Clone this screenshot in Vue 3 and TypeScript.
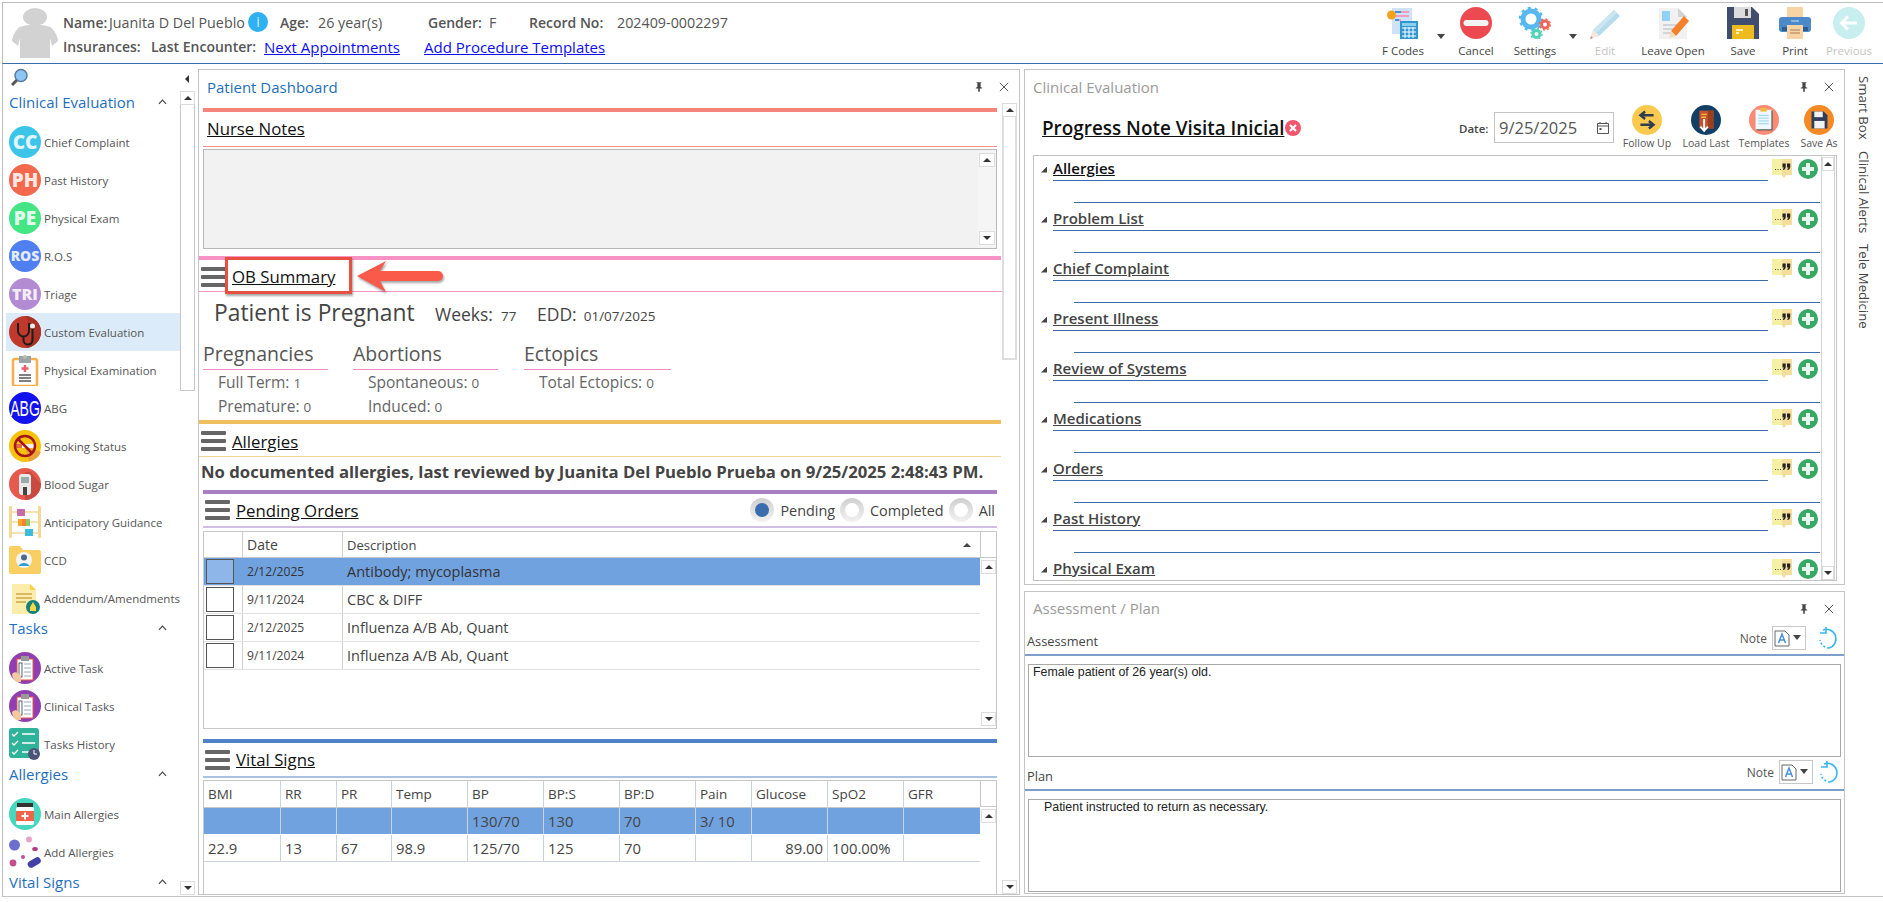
<script setup lang="ts">
const T = (s: string, size: number) =>
  `<text x="16" y="${16 + size * 0.36}" text-anchor="middle" font-family="Open Sans, sans-serif" font-weight="800" font-size="${size}" fill="#fff" fill-opacity=".85">${s}</text>`
const clip = `<rect x="8" y="7" width="16" height="21" fill="#fff" stroke="#e4574a"/><rect x="12" y="4" width="8" height="5" fill="#999"/><path d="M15 12h7M15 16h7M15 20h7M15 24h7" stroke="#9ab" /><rect x="10" y="11" width="3" height="14" fill="none" stroke="#2c3e50" stroke-width=".8"/><path d="M3 22c3-3 6-2 9 2v6H7c-2-2-4-5-4-8z" fill="#f3c9a0"/>`

const icons: Record<string, string> = {
  cc: `<circle cx="16" cy="16" r="16" fill="#3cc5e8"/>` + T('CC', 19),
  ph: `<circle cx="16" cy="16" r="16" fill="#f4694d"/>` + T('PH', 19),
  pe: `<circle cx="16" cy="16" r="16" fill="#43e585"/>` + T('PE', 19),
  ros: `<circle cx="16" cy="16" r="16" fill="#4f7ff0"/>` + T('ROS', 14),
  tri: `<circle cx="16" cy="16" r="16" fill="#b28bd2"/>` + T('TRI', 16),
  custom: `<circle cx="16" cy="16" r="16" fill="#c0392b"/><path d="M16 0a16 16 0 0 1 0 32c8-6 10-20 0-32z" fill="#a93226"/><path d="M9 7v8a5.5 5.5 0 0 0 11 0V7" fill="none" stroke="#1d1d1d" stroke-width="2"/><path d="M14.500 21v3a4.500 4.500 0 0 0 9 0V12" fill="none" stroke="#1d1d1d" stroke-width="2"/><circle cx="23.500" cy="10" r="2.500" fill="#eee"/>`,
  exam: `<rect x="4" y="5" width="24" height="27" rx="2" fill="#fff" stroke="#f5b04c" stroke-width="2.500"/><path d="M10 2h12v7H10z" fill="#9aa5a8"/><circle cx="16" cy="3" r="2" fill="#bbb"/><path d="M16 11v7M12.500 14.500h7" stroke="#ef5f6a" stroke-width="2.400"/><path d="M10 21h12M10 24h12M10 27h12" stroke="#555" stroke-width="1.300"/>`,
  abg: `<circle cx="16" cy="16" r="16" fill="#1212ef"/><text transform="translate(16 23.500) scale(1 1.600)" text-anchor="middle" font-family="Liberation Sans, sans-serif" font-size="14" fill="#fff">ABG</text>`,
  smoke: `<circle cx="16" cy="16" r="16" fill="#f8c10b"/><path d="M16 16 32 22a16 16 0 0 1-12 9.500z" fill="#e9a13a"/><rect x="5" y="14" width="22" height="4" fill="#f3f3f3"/><rect x="5" y="14" width="8" height="4" fill="#e2703a"/><circle cx="16" cy="16" r="10" fill="none" stroke="#a4161a" stroke-width="2.500"/><path d="M9 9l14 14" stroke="#a4161a" stroke-width="2.500"/>`,
  sugar: `<circle cx="16" cy="16" r="16" fill="#e55a4d"/><path d="M16 4h6l10 12a16 16 0 0 1-16 16z" fill="#c84a40"/><rect x="10" y="6" width="12" height="21" rx="3" fill="#e8e8e8"/><rect x="12" y="9" width="8" height="6" fill="#9aa"/><rect x="14" y="19" width="4" height="8" fill="#444"/>`,
  abacus: `<rect x="0" y="0" width="3" height="32" rx="1" fill="#f5d898"/><rect x="29" y="0" width="3" height="32" rx="1" fill="#f5d898"/><path d="M3 6h26M3 16h26M3 27h26" stroke="#f5d898" stroke-width="1.500"/><rect x="8" y="3" width="8" height="7" fill="#c86ba8"/><rect x="9" y="13" width="4" height="7" fill="#f5a623"/><rect x="13" y="13" width="4" height="7" fill="#f5813a"/><rect x="17" y="13" width="4" height="7" fill="#8cc96a"/><rect x="16" y="23" width="8" height="7" fill="#3cbde0"/>`,
  ccd: `<path d="M0 4a2 2 0 0 1 2-2h9l3 4h16a2 2 0 0 1 2 2v20a2 2 0 0 1-2 2H2a2 2 0 0 1-2-2z" fill="#f9cf63"/><circle cx="15" cy="16" r="8" fill="#f4f4f4"/><circle cx="15" cy="13.500" r="3" fill="#4a6a8a"/><path d="M9.500 22a6 5 0 0 1 11 0z" fill="#2d9fd8"/>`,
  add: `<path d="M3 2h18l6 6v24H3z" fill="#fcedaa"/><path d="M21 2l6 6h-6z" fill="#f8d04a"/><path d="M7 12h16M7 16h16M7 20h10" stroke="#c9a94a" stroke-width="1.400"/><circle cx="24" cy="25" r="7" fill="#16807a"/><path d="M24 20l3 5v4h-6v-4z" fill="#f7d84a"/>`,
  task: `<circle cx="16" cy="16" r="16" fill="#8f3fb0"/>` + clip,
  hist: `<rect x="0" y="0" width="30" height="30" rx="3" fill="#2fb39a"/><path d="M3 6l2 2 4-4M3 15l2 2 4-4M3 24l2 2 4-4" fill="none" stroke="#fff" stroke-width="1.300"/><path d="M13 6h13M13 15h13M13 24h7" stroke="#fff" stroke-width="1.600"/><circle cx="25" cy="26" r="6" fill="#4a5578"/><path d="M25 22v4h3" fill="none" stroke="#fff"/>`,
  mainall: `<circle cx="16" cy="16" r="16" fill="#46d8be"/><rect x="8" y="5" width="16" height="4" fill="#333"/><rect x="7" y="9" width="18" height="18" rx="2" fill="#fff"/><rect x="7" y="13" width="18" height="10" fill="#f0644c"/><path d="M16 14.500v7M12.500 18h7" stroke="#fff" stroke-width="2"/>`,
  addall: `<ellipse cx="5.500" cy="9" rx="5.500" ry="5.500" fill="#6d6fd0"/><circle cx="20" cy="3.500" r="3" fill="#e8a3c8"/><ellipse cx="26" cy="13" rx="2.800" ry="2" fill="#b03a80"/><circle cx="14" cy="21" r="2" fill="#c44f9c"/><circle cx="4" cy="27" r="3.400" fill="#c44f8c"/><rect x="18" y="23" width="14" height="7" rx="3.500" transform="rotate(-30 25 26)" fill="#4240a8"/>`,
  fcodes: `<rect x="5" y="1" width="20" height="26" fill="#cfe3f8"/><path d="M8 5h14M8 9h14M8 13h6" stroke="#f29ac0" stroke-width="2"/><path d="M8 5h6M8 13h4" stroke="#4a90d9" stroke-width="2"/><circle cx="4.500" cy="8" r="4.500" fill="#f4a11c"/><rect x="13" y="14" width="18" height="18" fill="#2f97d4"/><rect x="15" y="16" width="14" height="3" fill="#8bd1ee"/><path d="M15 21h14M15 25h14M15 29h14M18 20v11M22 20v11M26 20v11" stroke="#fff" stroke-width="1"/>`,
  cancel: `<circle cx="16" cy="16" r="16" fill="#ec4a50"/><rect x="3.500" y="13" width="25" height="6" rx="3" fill="#f3f3f3"/>`,
  settings: `<circle cx="12" cy="12" r="8" fill="none" stroke="#57b9f0" stroke-width="5"/><circle cx="12" cy="12" r="11" fill="none" stroke="#57b9f0" stroke-width="2.500" stroke-dasharray="3 3.900"/><circle cx="26" cy="17.500" r="3.500" fill="none" stroke="#f0675a" stroke-width="3"/><circle cx="26" cy="17.500" r="5.500" fill="none" stroke="#f0675a" stroke-width="1.400" stroke-dasharray="2 2.300"/><circle cx="17.500" cy="27" r="3.500" fill="none" stroke="#4fd3b6" stroke-width="3"/><circle cx="17.500" cy="27" r="5.500" fill="none" stroke="#4fd3b6" stroke-width="1.400" stroke-dasharray="2 2.300"/>`,
  edit: `<path d="M25 3l6 6L10 29l-6-6z" fill="#b5dcec"/><path d="M25 3l3 3L7 26l-3-3z" fill="#c9e6f1"/><path d="M4 23l6 6-9 3z" fill="#f3e6dc"/><path d="M2 29l2 2-3 1z" fill="#c88"/>`,
  leave: `<path d="M2 1h19l9 9v22H2z" fill="#f1f1f1"/><path d="M21 1l9 9h-9z" fill="#d4d4d4"/><rect x="5" y="4" width="8" height="10" fill="#8ed2f5"/><path d="M6 18h16M6 22h12M6 26h10" stroke="#c4ccd4" stroke-width="1.600"/><path d="M27 9l5 5-13 15-5-5z" fill="#f4812a"/><path d="M14 24l5 5-7 2z" fill="#f5d9b8"/>`,
  save: `<path d="M0 0h25l7 7v25H0z" fill="#414d6d"/><rect x="7" y="0" width="17" height="11" fill="#dcdcdc"/><rect x="18" y="2" width="3" height="7" fill="#555"/><rect x="5" y="18" width="22" height="14" fill="#eebb1e"/><path d="M9 23h7M9 26h3" stroke="#fff" stroke-width="1.300"/>`,
  print: `<rect x="8" y="0" width="16" height="12" fill="#f8d3a4"/><rect x="0" y="10" width="32" height="15" rx="3" fill="#4c89c8"/><rect x="3" y="20" width="26" height="4" fill="#2b5d93"/><rect x="8" y="18" width="16" height="14" fill="#f8d3a4"/><path d="M11 23h10M11 26h10" stroke="#a87c52"/><path d="M12 14h8" stroke="#cfe1f2"/>`,
  prev: `<circle cx="16" cy="16" r="16" fill="#c8eef0"/><path d="M24 16H9M15 9.500 8.500 16l6.500 6.500" fill="none" stroke="#fff" stroke-width="3"/>`,
  follow: `<circle cx="16" cy="16" r="16" fill="#fbc94e"/><path d="M23 11H10M14 7l-5 4 5 4M9 21h13M18 17l5 4-5 4" fill="none" stroke="#2c3e50" stroke-width="2.600"/>`,
  load: `<circle cx="16" cy="16" r="16" fill="#123f63"/><rect x="9" y="6" width="15" height="19" fill="#c8532b"/><rect x="18" y="6" width="6" height="19" fill="#9c3f21"/><path d="M11 10h6M11 13h5" stroke="#f5b841" stroke-width="1.500"/><path d="M14 15v12M10 23l4 4.500 4-4.500" fill="none" stroke="#fff" stroke-width="2"/>`,
  tmpl: `<circle cx="16" cy="16" r="16" fill="#f98b74"/><rect x="8" y="6" width="17" height="21" fill="#2c3e50"/><rect x="7" y="5" width="17" height="21" fill="#eef8fd"/><rect x="12" y="3" width="7" height="4" fill="#f5b841"/><path d="M10 11h11M10 14h11M10 17h11M10 20h11" stroke="#8fd0ee"/>`,
  saveas: `<circle cx="16" cy="16" r="16" fill="#f58a25"/><path d="M8 7h13l4 4v14H8z" fill="#2f3e5c"/><rect x="11" y="7" width="9" height="6" fill="#f2f2f2"/><rect x="11" y="17" width="11" height="8" fill="#f2f2f2"/>`,
  search: `<path d="M3 17 10 10" stroke="#555" stroke-width="3"/><circle cx="12" cy="7.500" r="6" fill="#8cc6f5" stroke="#5a7a99" stroke-width="1.500"/>`
}

type Item = { kind: 'head' | 'item'; label: string; icon?: string; active?: boolean }
const nav: Item[] = [
  { kind: 'head', label: 'Clinical Evaluation' },
  { kind: 'item', label: 'Chief Complaint', icon: 'cc' },
  { kind: 'item', label: 'Past History', icon: 'ph' },
  { kind: 'item', label: 'Physical Exam', icon: 'pe' },
  { kind: 'item', label: 'R.O.S', icon: 'ros' },
  { kind: 'item', label: 'Triage', icon: 'tri' },
  { kind: 'item', label: 'Custom Evaluation', icon: 'custom', active: true },
  { kind: 'item', label: 'Physical Examination', icon: 'exam' },
  { kind: 'item', label: 'ABG', icon: 'abg' },
  { kind: 'item', label: 'Smoking Status', icon: 'smoke' },
  { kind: 'item', label: 'Blood Sugar', icon: 'sugar' },
  { kind: 'item', label: 'Anticipatory Guidance', icon: 'abacus' },
  { kind: 'item', label: 'CCD', icon: 'ccd' },
  { kind: 'item', label: 'Addendum/Amendments', icon: 'add' },
  { kind: 'head', label: 'Tasks' },
  { kind: 'item', label: 'Active Task', icon: 'task' },
  { kind: 'item', label: 'Clinical Tasks', icon: 'task' },
  { kind: 'item', label: 'Tasks History', icon: 'hist' },
  { kind: 'head', label: 'Allergies' },
  { kind: 'item', label: 'Main Allergies', icon: 'mainall' },
  { kind: 'item', label: 'Add Allergies', icon: 'addall' },
  { kind: 'head', label: 'Vital Signs' }
]

const tools = [
  { label: 'F Codes', icon: 'fcodes', gap: 0, caret: true },
  { label: 'Cancel', icon: 'cancel', gap: 23 },
  { label: 'Settings', icon: 'settings', gap: 9, caret: true },
  { label: 'Edit', icon: 'edit', gap: 20, off: true },
  { label: 'Leave Open', icon: 'leave', gap: 18 },
  { label: 'Save', icon: 'save', gap: 20 },
  { label: 'Print', icon: 'print', gap: 2 },
  { label: 'Previous', icon: 'prev', gap: 4, off: true }
]
const noteTools = [
  { label: 'Follow Up', icon: 'follow', gap: 8 },
  { label: 'Load Last', icon: 'load', gap: 9 },
  { label: 'Templates', icon: 'tmpl', gap: 8 },
  { label: 'Save As', icon: 'saveas', gap: 5 }
]
const orders = [
  { date: '2/12/2025', desc: 'Antibody; mycoplasma', sel: true },
  { date: '9/11/2024', desc: 'CBC & DIFF' },
  { date: '2/12/2025', desc: 'Influenza A/B Ab, Quant' },
  { date: '9/11/2024', desc: 'Influenza A/B Ab, Quant' }
]
const radios = [
  { label: 'Pending', on: true },
  { label: 'Completed' },
  { label: 'All' }
]
const vitalCols = ['BMI', 'RR', 'PR', 'Temp', 'BP', 'BP:S', 'BP:D', 'Pain', 'Glucose', 'SpO2', 'GFR']
const vitalWidths = [76, 56, 55, 76, 76, 76, 76, 56, 76, 76, 77]
const vitalRows = [
  { sel: true, cells: ['', '', '', '', '130/70', '130', '70', '3/ 10', '', '', ''] },
  { sel: false, cells: ['22.9', '13', '67', '98.9', '125/70', '125', '70', '', '89.00', '100.00%', ''] }
]
const sections = ['Allergies', 'Problem List', 'Chief Complaint', 'Present Illness', 'Review of Systems', 'Medications', 'Orders', 'Past History', 'Physical Exam']
const planBlocks = [
  { label: 'Assessment', text: 'Female patient of 26 year(s) old.', cls: 'assess' },
  { label: 'Plan', text: 'Patient instructed to return as necessary.', cls: 'plan' }
]
</script>

<template>
  <div class="app">
    <header class="topbar">
      <svg class="avatar" viewBox="0 0 46 50">
        <ellipse cx="23" cy="9" rx="12" ry="9" fill="#d2d2d2" />
        <path d="M8 19c8-3 22-3 30 0 4 2 8 10 8 14l-6 5-2-8v20H8V30l-2 8-6-5c0-4 4-12 8-14z" fill="#d2d2d2" />
      </svg>
      <div class="patient">
        <div class="pline one">
          <b class="l-name">Name:</b><span class="v-name">Juanita D Del Pueblo</span>
          <span class="info">i</span>
          <b class="l-age">Age:</b><span class="v-age">26 year(s)</span>
          <b class="l-gender">Gender:</b><span class="v-gender">F</span>
          <b class="l-rec">Record No:</b><span class="v-rec">202409-0002297</span>
        </div>
        <div class="pline two">
          <b class="l-ins">Insurances:</b><b class="l-last">Last Encounter:</b>
          <a class="link l-next">Next Appointments</a><a class="link">Add Procedure Templates</a>
        </div>
      </div>
      <div class="tools">
        <div v-for="t in tools" :key="t.label" class="tool" :class="{ off: t.off }" :style="{ marginLeft: t.gap + 'px' }">
          <svg class="tool-ic" viewBox="0 0 32 32" v-html="icons[t.icon]"></svg>
          <span>{{ t.label }}</span>
          <i v-if="t.caret" class="caret"></i>
        </div>
      </div>
    </header>

    <div class="body">
      <aside class="sidebar">
        <div class="navcol">
          <svg class="search" viewBox="0 0 20 20" v-html="icons.search"></svg>
          <template v-for="n in nav" :key="n.label">
            <div v-if="n.kind === 'head'" class="navhead">
              <span>{{ n.label }}</span>
              <svg class="chev" viewBox="0 0 10 6"><path d="M1 5l4-4 4 4" fill="none" stroke="#444" stroke-width="1.300" /></svg>
            </div>
            <div v-else class="navitem" :class="{ active: n.active }">
              <svg class="navic" viewBox="0 0 32 32" v-html="icons[n.icon as string]"></svg>
              <span>{{ n.label }}</span>
            </div>
          </template>
        </div>
        <div class="navside">
          <i class="collapse"></i>
          <div class="sb navsb">
            <div class="sb-btn"><i class="up"></i></div>
            <div class="sb-thumb nav-thumb"></div>
            <div class="sb-fill"></div>
            <div class="sb-btn"><i class="down"></i></div>
          </div>
        </div>
      </aside>

      <section class="panel center">
        <div class="pin-x">
          <svg viewBox="0 0 10 12" class="pin"><path d="M2 0h6v1H7v5l2 1v1H6v4H4V8H1V7l2-1V1H2z" fill="#444" /></svg>
          <svg viewBox="0 0 12 12" class="x"><path d="M1 1l10 10M11 1 1 11" stroke="#555" stroke-width="1.200" /></svg>
        </div>
        <div class="dash">
          <div class="panel-title blue">Patient Dashboard</div>
          <div class="bar salmon"></div>
          <div class="head nurse-head"><a class="u">Nurse Notes</a></div>
          <div class="nurse-box">
            <div class="sb nurse-sb">
              <div class="sb-btn"><i class="up"></i></div>
              <div class="sb-fill"></div>
              <div class="sb-btn"><i class="down"></i></div>
            </div>
          </div>
          <div class="bar pink"></div>
          <div class="head ob-head">
            <span class="menu"><i></i><i></i><i></i></span><a class="u">OB Summary</a>
            <div class="callout"></div>
            <svg class="arrow" viewBox="0 0 92 36">
              <path d="M2 17 31 2l-6 10h58a5 5 0 0 1 0 10H25l6 11z" fill="#f95a4a" style="filter: drop-shadow(1px 2px 1px rgba(0,0,0,.35))" />
            </svg>
          </div>
          <div class="preg">
            <span class="preg-big">Patient is Pregnant</span>
            <span class="preg-l weeks">Weeks:</span><span class="preg-v w77">77</span>
            <span class="preg-l">EDD:</span><span class="preg-v edd">01/07/2025</span>
          </div>
          <div class="stats">
            <div class="stat s1">
              <div class="stat-h">Pregnancies</div>
              <div class="stat-r">Full Term: <small>1</small></div>
              <div class="stat-r">Premature: <small>0</small></div>
            </div>
            <div class="stat s2">
              <div class="stat-h">Abortions</div>
              <div class="stat-r">Spontaneous: <small>0</small></div>
              <div class="stat-r">Induced: <small>0</small></div>
            </div>
            <div class="stat s3">
              <div class="stat-h">Ectopics</div>
              <div class="stat-r">Total Ectopics: <small>0</small></div>
            </div>
          </div>
          <div class="bar gold"></div>
          <div class="head all-head"><span class="menu"><i></i><i></i><i></i></span><a class="u">Allergies</a></div>
          <div class="nka">No documented allergies, last reviewed by Juanita Del Pueblo Prueba on 9/25/2025 2:48:43 PM.</div>
          <div class="bar purple"></div>
          <div class="head po-head">
            <span class="menu"><i></i><i></i><i></i></span><a class="u">Pending Orders</a>
            <div class="radios">
              <label v-for="r in radios" :key="r.label" class="radio"><span class="dot" :class="{ on: r.on }"></span>{{ r.label }}</label>
            </div>
          </div>
          <div class="grid orders">
            <div class="grid-main">
              <div class="o-row o-h">
                <div class="c0"></div><div class="c1">Date</div><div class="c2">Description<i class="sort"></i></div>
              </div>
              <div v-for="o in orders" :key="o.date + o.desc" class="o-row" :class="{ sel: o.sel }">
                <div class="c0"><span class="chk"></span></div><div class="c1">{{ o.date }}</div><div class="c2">{{ o.desc }}</div>
              </div>
            </div>
            <div class="grid-side">
              <div class="corner"></div>
              <div class="sb grid-sb">
                <div class="sb-btn"><i class="up"></i></div>
                <div class="sb-fill"></div>
                <div class="sb-btn"><i class="down"></i></div>
              </div>
            </div>
          </div>
          <div class="bar blue-bar"></div>
          <div class="head vs-head"><span class="menu"><i></i><i></i><i></i></span><a class="u">Vital Signs</a></div>
          <div class="grid vitals">
            <div class="grid-main">
              <div class="v-row v-h">
                <div v-for="(c, i) in vitalCols" :key="c" class="v-c" :style="{ width: vitalWidths[i] + 'px' }">{{ c }}</div>
              </div>
              <div v-for="(r, ri) in vitalRows" :key="ri" class="v-row v-d" :class="{ sel: r.sel }">
                <div v-for="(c, i) in r.cells" :key="i" class="v-c" :class="{ right: c === '89.00' }" :style="{ width: vitalWidths[i] + 'px' }">{{ c }}</div>
              </div>
            </div>
            <div class="grid-side">
              <div class="corner"></div>
              <div class="sb grid-sb">
                <div class="sb-btn"><i class="up"></i></div>
              </div>
            </div>
          </div>
        </div>
        <div class="sb dash-sb">
          <div class="sb-btn"><i class="up"></i></div>
          <div class="sb-thumb dash-thumb"></div>
          <div class="sb-fill"></div>
          <div class="sb-btn"><i class="down"></i></div>
        </div>
      </section>

      <div class="rightcol">
        <section class="panel eval">
          <div class="pin-x">
            <svg viewBox="0 0 10 12" class="pin"><path d="M2 0h6v1H7v5l2 1v1H6v4H4V8H1V7l2-1V1H2z" fill="#444" /></svg>
            <svg viewBox="0 0 12 12" class="x"><path d="M1 1l10 10M11 1 1 11" stroke="#555" stroke-width="1.200" /></svg>
          </div>
          <div class="panel-title grey">Clinical Evaluation</div>
          <div class="note-row">
            <a class="note-title">Progress Note Visita Inicial</a>
            <svg class="note-x" viewBox="0 0 16 16"><circle cx="8" cy="8" r="8" fill="#f0566e" /><path d="M5 5l6 6M11 5l-6 6" stroke="#fff" stroke-width="2.200" /></svg>
            <span class="date-l">Date:</span>
            <div class="date-in">
              <span>9/25/2025</span>
              <svg viewBox="0 0 14 14" class="cal"><path d="M1.500 2.500h11v10h-11zM1.500 5h11M4 1v2M10 1v2" fill="none" stroke="#555" /><rect x="3.500" y="7" width="2" height="2" fill="#555" /></svg>
            </div>
            <div v-for="t in noteTools" :key="t.label" class="ntool" :style="{ marginLeft: t.gap + 'px' }">
              <svg viewBox="0 0 32 32" class="ntool-ic" v-html="icons[t.icon]"></svg>
              <span>{{ t.label }}</span>
            </div>
          </div>
          <div class="evalbox">
            <div class="evallist">
              <div v-for="(s, i) in sections" :key="s" class="erow">
                <div class="eline">
                  <i class="tri"></i>
                  <div class="ename"><a :class="{ first: i === 0 }">{{ s }}</a></div>
                  <svg viewBox="0 0 20 19" class="bubble">
                    <path d="M0 0h20v16h-6l-2 3-2-3H0z" fill="#f5f1a4" />
                    <path d="M10 0h10v16h-6l-2 3-2-3z" fill="#f5dd9c" />
                    <path d="M3 10.500h1M5.500 10.500h1M8 10.500h1" stroke="#444" stroke-width="1.200" />
                    <path d="M10.500 4.500h3.200v3.200c0 1.800-1 3-2.600 3.300l-.3-.9c.8-.3 1.200-.9 1.200-1.500h-1.500zM15 4.500h3.200v3.200c0 1.800-1 3-2.600 3.300l-.3-.9c.8-.3 1.200-.9 1.200-1.500H15z" fill="#222" />
                  </svg>
                  <svg viewBox="0 0 20 20" class="plus"><circle cx="10" cy="10" r="10" fill="#38a865" /><path d="M10 4v12M4 10h12" stroke="#e8f7ee" stroke-width="4" /></svg>
                </div>
                <div class="esub"></div>
              </div>
            </div>
            <div class="sb evalsb">
              <div class="sb-btn"><i class="up"></i></div>
              <div class="sb-fill"></div>
              <div class="sb-btn"><i class="down"></i></div>
            </div>
          </div>
        </section>

        <section class="panel plan-panel">
          <div class="pin-x">
            <svg viewBox="0 0 10 12" class="pin"><path d="M2 0h6v1H7v5l2 1v1H6v4H4V8H1V7l2-1V1H2z" fill="#444" /></svg>
            <svg viewBox="0 0 12 12" class="x"><path d="M1 1l10 10M11 1 1 11" stroke="#555" stroke-width="1.200" /></svg>
          </div>
          <div class="panel-title grey small">Assessment / Plan</div>
          <div v-for="b in planBlocks" :key="b.label" class="pblock" :class="b.cls">
            <div class="phead">
              <span class="plabel">{{ b.label }}</span>
              <div class="ptools">
                <span class="nlabel">Note</span>
                <div class="nbox">
                  <svg viewBox="0 0 16 17" class="ndoc"><path d="M1 1h10l4 4v11H1z" fill="#fff" stroke="#666" /><path d="M4.500 13 8 4l3.500 9M6 10h4" fill="none" stroke="#4a8fdc" stroke-width="1.500" /></svg>
                  <i class="caret mini"></i>
                </div>
                <svg viewBox="0 0 22 22" class="refresh">
                  <path d="M5 3a9.500 9.500 0 1 1 6 18" fill="none" stroke="#39b6f2" stroke-width="1.600" />
                  <path d="M11 21a9.500 9.500 0 0 1-9-8" fill="none" stroke="#39b6f2" stroke-width="1.600" stroke-dasharray="2 2" />
                  <path d="M8 0v6H2" fill="none" stroke="#39b6f2" stroke-width="1.600" />
                </svg>
              </div>
            </div>
            <div class="ptext">{{ b.text }}</div>
          </div>
        </section>
      </div>

      <nav class="rail">
        <span>Smart Box</span>
        <span>Clinical Alerts</span>
        <span>Tele Medicine</span>
      </nav>
    </div>
  </div>
</template>

<style>
html, body { margin: 0; background: #fff; overflow: hidden; }
</style>

<style scoped>
.app {
  width: 1883px;
  height: 902px;
  box-sizing: border-box;
  padding: 2px 0 0 2px;
  font-family: "Open Sans", "Noto Sans", sans-serif;
  color: #444;
  background: #fff;
  overflow: hidden;
}
a { color: inherit; }

/* top bar */
.topbar {
  height: 62px;
  box-sizing: border-box;
  border: 1px solid #bdbdbd;
  border-width: 1px 0 1px 1px;
  border-bottom: 1.500px solid #3a6cae;
  display: flex;
  position: relative;
}
.avatar { width: 46px; height: 50px; margin: 5px 0 0 9px; flex: none; }
.patient { margin-left: 5px; padding-top: 9px; flex: none; width: 1240px; }
.pline { display: flex; align-items: center; font-size: 14.300px; white-space: nowrap; }
.one { height: 20px; }
.two { height: 29px; }
.pline b { font-weight: 600; color: #555; font-size: 14px; }
.pline span { color: #555; }
.v-name { width: 139px; }
.l-name { width: 46px; }
.info {
  width: 20px; height: 20px; border-radius: 50%; background: #2fb0f0; color: #cfeeff !important;
  text-align: center; line-height: 20px; font-size: 14px; flex: none;
}
.l-age { margin-left: 12px; width: 38px; }
.v-age { width: 110px; }
.l-gender { width: 61px; }
.v-gender { width: 40px; }
.l-rec { width: 88px; }
.l-ins { width: 88px; }
.l-last { width: 113px; }
.link { color: #0d0dee; text-decoration: underline; font-size: 15px; }
.l-next { width: 160px; display: block; }

.tools { display: flex; position: absolute; left: 1375px; top: 4px; }
.tool { width: 50px; display: flex; flex-direction: column; align-items: center; position: relative; font-size: 11.500px; color: #444; white-space: nowrap; }
.tool.off { color: #c4c4c4; }
.tool-ic { width: 32px; height: 32px; margin-bottom: 5px; flex: none; }
.tool span { line-height: 14px; }
.caret { width: 0; height: 0; border: 4px solid transparent; border-top: 5px solid #444; border-bottom: 0; position: absolute; left: 59px; top: 27px; }

/* layout */
.body {
  height: 833px;
  box-sizing: border-box;
  display: flex;
  border-left: 1px solid #bdbdbd;
  border-bottom: 1px solid #c4c4c4;
}
.sidebar { width: 195px; flex: none; display: flex; overflow: hidden; }
.navcol { width: 177px; flex: none; }
.search { width: 20px; height: 20px; display: block; margin: 4px 0 3px 6px; }
.navhead { height: 32px; display: flex; padding: 0 0 0 6px; font-size: 15px; color: #1f6fc0; position: relative; line-height: 22px; white-space: nowrap; }
.chev { width: 9px; height: 6px; position: absolute; left: 155px; top: 8px; }
.navitem { height: 38px; display: flex; align-items: center; font-size: 11.500px; color: #555; white-space: nowrap; margin-left: 3px; padding-left: 3px; box-sizing: border-box; }
.navitem.active { background: #dcebf9; }
.navic { width: 32px; height: 32px; flex: none; margin-right: 3px; }
.navside { width: 18px; flex: none; position: relative; }
.collapse { position: absolute; left: 5px; top: 11px; width: 0; height: 0; border: 4px solid transparent; border-right: 4px solid #333; border-left: 0; }
.navsb { height: 804px; margin-top: 27px; width: 15px; }

/* scrollbars */
.sb { display: flex; flex-direction: column; box-sizing: border-box; flex: none; }
.sb-btn { height: 14px; flex: none; border: 1px solid #dcdcdc; display: flex; align-items: center; justify-content: center; background: #fff; box-sizing: border-box; }
.sb-fill { flex: 1; }
.sb-thumb { border: 1px solid #c8c8c8; border-top: 0; box-sizing: border-box; }
.nav-thumb { height: 286px; }
.up, .down { width: 0; height: 0; border: 4px solid transparent; display: block; }
.up { border-bottom: 4px solid #333; border-top: 0; }
.down { border-top: 4px solid #333; border-bottom: 0; }

/* panels */
.panel { border: 1px solid #c4c4c4; box-sizing: border-box; position: relative; background: #fff; }
.center { width: 822px; height: 826px; margin-top: 5px; display: flex; flex: none; }
.dash { width: 803px; flex: none; overflow: hidden; }
.dash-sb { width: 15px; margin-top: 33px; height: 791px; }
.dash-thumb { height: 243px; border-color: #dedede; border-width: 0 2px 2px; }
.pin-x { position: absolute; right: 10px; top: 12px; display: flex; align-items: center; gap: 16px; }
.pin { width: 8px; height: 10px; }
.x { width: 10px; height: 10px; }

.panel-title { height: 38px; display: flex; align-items: center; padding: 0 0 5px 8px; box-sizing: border-box; font-size: 15px; }
.blue { color: #1f6fb8; }
.grey { color: #9a9a9a; }

.bar { height: 4px; }
.salmon { background: #f5847c; margin: 0 5px 0 4px; }
.pink { background: #f892c4; margin: 7px 1px 0 0; }
.gold { background: #f0c060; margin: 0 1px 0 0; }
.purple { background: #a97fc4; margin: 1px 5px 0 4px; height: 4px; }
.blue-bar { background: #4f82c4; margin: 10px 5px 0 4px; }

.head { display: flex; align-items: center; box-sizing: border-box; position: relative; }
.u { font-size: 16.800px; color: #111; text-decoration: underline; white-space: nowrap; }
.menu { width: 25px; height: 20px; display: flex; flex-direction: column; justify-content: space-between; margin: 0 6px 0 2px; flex: none; }
.menu i { height: 4px; background: #666; border-radius: 1px; display: block; }
.nurse-head { height: 35px; margin: 0 5px 0 4px; padding: 0 0 2px 4px; border-bottom: 1px solid #f5938c; }
.nurse-box { height: 100px; margin: 2px 5px 0 4px; box-sizing: border-box; background: #f2f2f2; border: 1px solid #b8b8b8; display: flex; justify-content: flex-end; }
.nurse-sb { width: 18px; height: 98px; padding: 3px 1px; background: #f5f5f5; }
.ob-head { height: 32px; padding-top: 2px; border-bottom: 1px solid #f592c6; }
.callout {
  position: absolute; left: 26px; top: -3px; width: 127px; height: 37px; box-sizing: border-box;
  border: 3px solid #e8503f; box-shadow: 1px 2px 2px rgba(0, 0, 0, .35);
}
.arrow { position: absolute; left: 156px; top: -1px; width: 92px; height: 36px; }

.preg { height: 46px; display: flex; align-items: baseline; padding: 5px 0 0 15px; box-sizing: border-box; white-space: nowrap; color: #444; }
.preg-big { font-size: 22.800px; width: 221px; }
.preg-l { font-size: 17.500px; }
.weeks { width: 66px; }
.preg-v { font-size: 13.500px; }
.w77 { width: 36px; }
.edd { margin-left: 7px; }

.stats { display: flex; height: 82px; color: #555; }
.stat { flex: none; }
.s1 { width: 125px; margin-left: 4px; }
.s2 { width: 145px; margin-left: 25px; }
.s3 { width: 147px; margin-left: 26px; }
.stat-h { height: 31px; font-size: 19.500px; line-height: 32px; border-bottom: 1px solid #f08cc8; white-space: nowrap; }
.stat-r { height: 24px; line-height: 25px; font-size: 15.500px; padding-left: 15px; white-space: nowrap; color: #666; }
.stat-r small { font-size: 13.500px; }

.all-head { height: 33px; padding-top: 2px; border-bottom: 1px solid #f2d694; margin-right: 1px; }
.nka { height: 32px; line-height: 29px; padding-left: 2px; font-size: 16.700px; font-weight: 700; color: #444; white-space: nowrap; }
.po-head { height: 34px; margin: 0 5px 0 4px; border-bottom: 2px solid #d4bde4; }
.radios { margin-left: auto; display: flex; font-size: 14.400px; color: #444; padding-right: 2px; }
.radio { display: flex; align-items: center; white-space: nowrap; }
.radio + .radio { margin-left: 5px; }
.dot {
  width: 24px; height: 24px; border-radius: 50%; background: linear-gradient(#cfcfcf, #f2f2f2); margin-right: 6px; position: relative;
  display: block; flex: none;
}
.dot::after { content: ""; position: absolute; inset: 5px; border-radius: 50%; background: #fff; }
.dot.on::after { background: #3a6cae; }

.grid { display: flex; border: 1px solid #c8c8c8; box-sizing: border-box; margin: 0 5px 0 4px; font-size: 13.500px; color: #444; }
.orders { height: 198px; margin-top: 3px; }
.grid-main { width: 776px; flex: none; }
.grid-side { width: 17px; flex: none; display: flex; flex-direction: column; }
.corner { height: 26px; flex: none; border: 1px solid #c8c8c8; border-width: 0 0 1px 1px; box-sizing: border-box; }
.grid-sb { flex: 1; padding: 2px 1px; }
.o-row { display: flex; height: 28px; border-bottom: 1px solid #e2e2e2; box-sizing: border-box; }
.o-h { height: 26px; border-bottom: 1px solid #c8c8c8; }
.o-row.sel { background: #70a2e0; color: #333; }
.o-row > div { display: flex; align-items: center; box-sizing: border-box; padding-left: 4px; white-space: nowrap; }
.c0 { width: 38px; padding-left: 1px !important; }
.c1 { width: 100px; border-left: 1px solid #d0d0d0; font-size: 12.100px; }
.c2 { flex: 1; border-left: 1px solid #d0d0d0; position: relative; font-size: 14.500px; }
.o-h .c1 { font-size: 14px; }
.o-h .c2 { font-size: 13px; }
.o-row.sel .c1, .o-row.sel .c2 { border-left-color: transparent; }
.chk { width: 28px; height: 25px; border: 1px solid #555; box-sizing: border-box; display: block; margin-left: 1px; }
.sel .chk { background: #8fb6e8; }
.sort { position: absolute; right: 9px; top: 11px; width: 0; height: 0; border: 4px solid transparent; border-bottom: 4px solid #444; border-top: 0; }

.vs-head { height: 35px; margin: 0 5px 0 4px; border-bottom: 2px solid #a9c2e2; }
.vitals { height: 120px; margin-top: 2px; }
.v-row { display: flex; height: 27px; border-bottom: 1px solid #cdd3dd; box-sizing: border-box; }
.v-h { border-bottom: 1px solid #c8c8c8; }
.v-d { font-size: 14.800px; }
.v-row.sel { background: #70a2e0; border-bottom-color: #fff; }
.v-c { box-sizing: border-box; padding: 0 4px; line-height: 27px; border-left: 1px solid #cdd3dd; white-space: nowrap; flex: none; overflow: hidden; }
.v-c:first-child { border-left: 0; }
.v-c.right { text-align: right; }

/* right */
.rightcol { width: 821px; flex: none; margin: 5px 0 0 4px; display: flex; flex-direction: column; gap: 6px; }
.eval { height: 516px; flex: none; }
.eval .panel-title { height: 34px; padding: 0 0 0 8px; }
.note-row { height: 51px; display: flex; align-items: flex-start; padding-left: 17px; box-sizing: border-box; }
.note-title { font-size: 18.900px; font-weight: 600; color: #111; text-decoration: underline; line-height: 48px; white-space: nowrap; width: 243px; }
.note-x { width: 16px; height: 16px; margin-top: 16px; flex: none; }
.date-l { font-size: 11.500px; font-weight: 600; color: #444; margin: 17px 0 0 158px; width: 35px; }
.date-in { width: 120px; height: 31px; margin-top: 8px; box-sizing: border-box; border: 1px solid #c4c4c4; padding-left: 4px; display: flex; align-items: center; font-size: 16.500px; color: #555; position: relative; }
.cal { width: 14px; height: 14px; position: absolute; right: 3px; top: 8px; }
.ntool { width: 50px; display: flex; flex-direction: column; align-items: center; font-size: 10.500px; color: #555; white-space: nowrap; padding-top: 1px; }
.ntool-ic { width: 30px; height: 30px; flex: none; margin-bottom: 1px; }
.ntool span { line-height: 14px; }
.evalbox { margin-left: 8px; width: 804px; height: 426px; box-sizing: border-box; border: 1px solid #c4c4c4; display: flex; overflow: hidden; }
.evallist { width: 786px; flex: none; overflow: hidden; height: 424px; }
.erow { height: 50px; }
.eline { display: flex; height: 25px; align-items: center; }
.tri { width: 6px; height: 6px; margin: 2px 0 0 7px; background: #444; clip-path: polygon(100% 0, 100% 100%, 0 100%); display: block; flex: none; }
.ename { width: 715px; margin-left: 6px; height: 24px; border-bottom: 1.200px solid #3a6cae; font-size: 15px; font-weight: 600; line-height: 24px; color: #444; white-space: nowrap; }
.ename a { text-decoration: underline; }
.ename a.first { color: #111; }
.bubble { width: 20px; height: 19px; margin-left: 4px; flex: none; }
.plus { width: 20px; height: 20px; margin-left: 6px; flex: none; }
.esub { height: 1.200px; margin: 21px 0 0 40px; width: 746px; background: #3a6cae; }
.evalsb { width: 14px; padding-top: 1px; margin-left: 1px; height: 424px; border: 1px solid #d4d4d4; border-width: 0 1px; }

.plan-panel { height: 303px; flex: none; }
.plan-panel .panel-title { height: 35px; padding: 0 0 3px 8px; }
.pblock { padding: 0 1px; }
.phead { height: 27px; border-bottom: 2px solid #7e9fca; display: flex; align-items: flex-end; margin: 0 -1px; padding-left: 2px; position: relative; }
.plan .phead { height: 32px; }
.plabel { font-size: 12.800px; color: #444; line-height: 20px; margin-bottom: 3px; }
.ptools { position: absolute; top: -1px; right: 4px; display: flex; align-items: center; }
.plan .ptools { top: 3px; right: 3px; }
.nlabel { font-size: 12px; color: #555; margin-right: 5px; }
.nbox { width: 34px; height: 24px; border: 1px solid #c8c8c8; box-sizing: border-box; display: flex; align-items: center; position: relative; }
.ndoc { width: 16px; height: 17px; margin-left: 1px; }
.caret.mini { left: 20px; top: 8px; }
.refresh { width: 22px; height: 22px; margin-left: 12px; }
.plan .refresh { margin-left: 6px; }
.ptext { height: 93px; margin: 8px 2px 0; border: 1px solid #a8a8a8; box-sizing: border-box; font-family: "Liberation Sans", sans-serif; font-size: 12.400px; color: #222; padding: 0 4px; line-height: 14px; }
.plan .ptext { padding-left: 15px; }

.rail { flex: 1; display: flex; flex-direction: column; align-items: center; padding: 12px 0 0 0; gap: 11px; }
.rail span { writing-mode: vertical-rl; font-size: 13.200px; color: #444; white-space: nowrap; }
</style>
